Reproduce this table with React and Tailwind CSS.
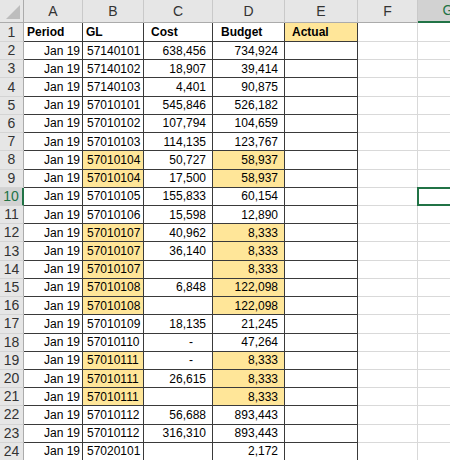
import React from "react";

const data = [
  ["57140101", "638,456", "734,924", 0],
  ["57140102", "18,907", "39,414", 0],
  ["57140103", "4,401", "90,875", 0],
  ["57010101", "545,846", "526,182", 0],
  ["57010102", "107,794", "104,659", 0],
  ["57010103", "114,135", "123,767", 0],
  ["57010104", "50,727", "58,937", 1],
  ["57010104", "17,500", "58,937", 1],
  ["57010105", "155,833", "60,154", 0],
  ["57010106", "15,598", "12,890", 0],
  ["57010107", "40,962", "8,333", 1],
  ["57010107", "36,140", "8,333", 1],
  ["57010107", "", "8,333", 1],
  ["57010108", "6,848", "122,098", 1],
  ["57010108", "", "122,098", 1],
  ["57010109", "18,135", "21,245", 0],
  ["57010110", "-", "47,264", 0],
  ["57010111", "-", "8,333", 1],
  ["57010111", "26,615", "8,333", 1],
  ["57010111", "", "8,333", 1],
  ["57010112", "56,688", "893,443", 0],
  ["57010112", "316,310", "893,443", 0],
  ["57020101", "", "2,172", 0],
];

const dataCell = "border-r border-b border-[#3a3a3a] flex items-center overflow-hidden whitespace-nowrap";
const gridCell = "border-r border-b border-[#d9d9d9]";
const rowHead =
  "border-r border-b border-r-[#ababab] border-b-[#d4d4d4] bg-[#e6e6e6] flex items-center justify-center text-[14px] text-[#333]";
const colHead =
  "border-r border-b border-r-[#c9c9c9] border-b-[#ababab] bg-[#e6e6e6] flex items-center justify-center text-[14px] text-[#333]";

export default function App() {
  return (
    <div
      className="w-[450px] h-[460px] overflow-hidden bg-white text-black"
      style={{ fontFamily: '"Liberation Sans", Arial, sans-serif' }}
    >
      <div className="grid grid-cols-[24px_59px_61px_69px_72px_73px_60px_60px] w-[478px]">
        {/* header row */}
        <div className="h-[23px] border-r border-b border-r-[#ababab] border-b-[#ababab] bg-[#e6e6e6] flex items-end justify-end pr-[3px] pb-[3px]">
          <svg width="14" height="14" viewBox="0 0 14 14">
            <polygon points="14,0 14,14 0,14" fill="#bdbdbd" />
          </svg>
        </div>
        {["A", "B", "C", "D", "E", "F"].map((l) => (
          <div key={l} className={`h-[23px] ${colHead}`}>
            {l}
          </div>
        ))}
        <div className="h-[23px] bg-[#d2d2d2] border-b-2 border-b-[#217346] flex items-center justify-center text-[14px] text-[#217346]">
          G
        </div>

        {/* row 1 */}
        <div className={`h-[19px] ${rowHead}`}>1</div>
        <div className={`h-[19px] ${dataCell} pl-[3px] font-bold text-[12px]`}>Period</div>
        <div className={`h-[19px] ${dataCell} pl-[3px] font-bold text-[12px]`}>GL</div>
        <div className={`h-[19px] ${dataCell} pl-[7px] font-bold text-[12px]`}>Cost</div>
        <div className={`h-[19px] ${dataCell} pl-[8px] font-bold text-[12px]`}>Budget</div>
        <div className={`h-[19px] ${dataCell} pl-[7px] font-bold text-[12px] bg-[#ffe699]`}>Actual</div>
        <div className={`h-[19px] ${gridCell}`}></div>
        <div className="h-[19px] border-b border-[#d9d9d9]"></div>

        {data.map((r, i) => {
          const n = i + 2;
          const sel = n === 10;
          const h = "h-[18.23px]";
          return (
            <React.Fragment key={n}>
              <div
                className={
                  sel
                    ? `${h} border-r-2 border-b border-r-[#217346] border-b-[#d4d4d4] bg-[#d2d2d2] flex items-center justify-center text-[14px] text-[#217346]`
                    : `${h} ${rowHead}`
                }
              >
                {n}
              </div>
              <div className={`${h} ${dataCell} justify-end pr-[2px] text-[12px]`}>Jan 19</div>
              <div className={`${h} ${dataCell} pl-[4px] text-[12px] ${r[3] ? "bg-[#ffe699]" : ""}`}>{r[0]}</div>
              <div
                className={`${h} ${dataCell} justify-end text-[12px] ${r[1] === "-" ? "pr-[19px]" : "pr-[6px]"}`}
              >
                {r[1]}
              </div>
              <div className={`${h} ${dataCell} justify-end pr-[6px] text-[12px] ${r[3] ? "bg-[#ffe699]" : ""}`}>
                {r[2]}
              </div>
              <div className={`${h} ${dataCell}`}></div>
              <div className={`${h} ${gridCell}`}></div>
              <div className={`${h} border-b border-[#d9d9d9] relative`}>
                {sel && (
                  <div className="absolute left-[-1px] top-[-1px] right-0 bottom-[-1px] border-2 border-[#217346]"></div>
                )}
              </div>
            </React.Fragment>
          );
        })}
      </div>
    </div>
  );
}
